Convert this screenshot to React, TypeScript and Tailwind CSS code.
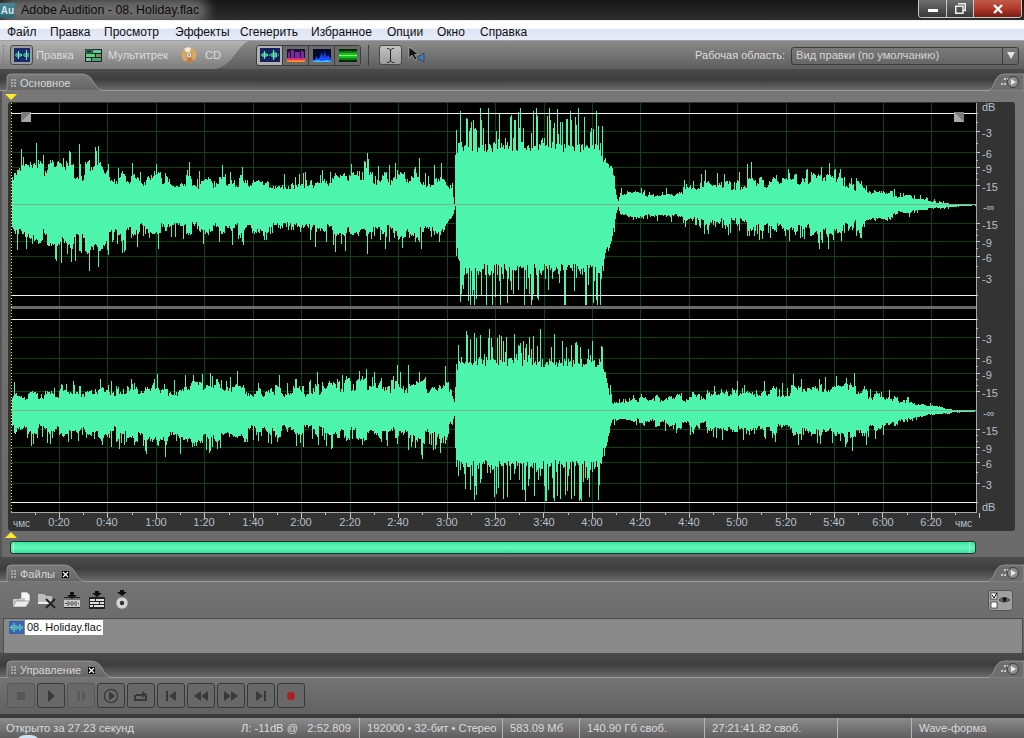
import React from "react";

const FONT = "[font-family:'Liberation_Sans',Arial,sans-serif]";

type Pt = [number, number];
function env(pts: Pt[], x: number) {
  for (let i = 1; i < pts.length; i++) {
    if (x <= pts[i][0]) {
      const [a, b] = [pts[i - 1], pts[i]];
      return a[1] + ((b[1] - a[1]) * (x - a[0])) / (b[0] - a[0]);
    }
  }
  return pts[pts.length - 1][1];
}
function rng(seed: number) {
  let s = seed;
  return () => {
    s = (s + 0x6d2b79f5) | 0;
    let t = Math.imul(s ^ (s >>> 15), 1 | s);
    t = (t + Math.imul(t ^ (t >>> 7), 61 | t)) ^ t;
    return ((t ^ (t >>> 14)) >>> 0) / 4294967296;
  };
}
function wave(top: Pt[], bot: Pt[], cy: number, seed: number, minY: number, maxY: number) {
  const r = rng(seed);
  let chunk = 0.8;
  let left = 0;
  const sample = (a: number, x: number) => {
    const loud = x > 456 && x < 604;
    const roll = r();
    if (loud) {
      if (roll < 0.33) return a * (0.74 + r() * 0.38);
      return a * (0.6 + r() * 0.12);
    }
    if (roll < 0.14) return a * (chunk + 0.15 + r() * 0.4);
    return a * (chunk - 0.08 + r() * 0.16);
  };
  let d = "";
  for (let x = 12; x < 976; x++) {
    if (left-- <= 0) {
      chunk = 0.62 + r() * 0.42;
      left = 1 + Math.floor(r() * 5);
    }
    const u = Math.max(cy - sample(env(top, x), x), minY);
    const l = Math.min(cy + sample(env(bot, x), x), maxY);
    d += `M${x + 0.5} ${u.toFixed(0)}V${l.toFixed(0)}`;
  }
  return d;
}

const c1t: Pt[] = [[12,42],[20,48],[40,42],[60,44],[80,40],[100,48],[105,36],[130,30],[160,32],[200,26],[240,28],[280,26],[320,28],[370,36],[400,32],[440,30],[452,18],[454,1],[455,55],[458,90],[470,88],[600,88],[604,62],[612,36],[616,10],[618,3],[620,14],[660,12],[700,22],[740,26],[780,30],[820,32],[860,22],[900,12],[930,5],[950,1],[975,0.5]];
const c1b: Pt[] = [[12,36],[40,38],[70,44],[100,52],[110,36],[150,30],[200,28],[260,30],[330,30],[390,32],[430,38],[445,24],[453,10],[455,1],[456,55],[458,84],[462,98],[600,98],[606,60],[612,30],[616,8],[618,2],[620,12],[660,14],[700,18],[760,26],[820,30],[860,26],[900,10],[930,4],[975,0.5]];
const c2t: Pt[] = [[12,20],[100,22],[140,24],[200,28],[260,24],[300,24],[340,32],[400,32],[450,28],[454,8],[456,50],[458,76],[600,72],[606,40],[612,12],[618,8],[640,14],[700,18],[780,24],[840,28],[880,18],[920,8],[950,2],[975,0.5]];
const c2b: Pt[] = [[12,24],[60,24],[120,28],[170,36],[230,26],[300,24],[350,28],[400,30],[445,32],[454,6],[456,50],[460,82],[600,82],[606,40],[612,12],[618,8],[660,16],[720,20],[800,24],[860,26],[900,13],[930,4],[975,0.5]];

const times = ["0:20","0:40","1:00","1:20","1:40","2:00","2:20","2:40","3:00","3:20","3:40","4:00","4:20","4:40","5:00","5:20","5:40","6:00","6:20"];
const gridX = times.map((_, i) => Math.round(59 + i * 48.45));
const h1 = [131,152,167,185,223,241,256,277];
const h2 = [337,358,373,391,429,447,462,483];
const dbLabels: [string, number][] = [["dB",107],["-3",133],["-6",154],["-9",169],["-15",187],["-∞",207],["-15",225],["-9",243],["-6",258],["-3",279],["-3",339],["-6",360],["-9",375],["-15",393],["-∞",413],["-15",431],["-9",449],["-6",464],["-3",485],["dB",507]];

function Chart() {
  const w1 = React.useMemo(() => wave(c1t, c1b, 205, 7, 108, 305), []);
  const w2 = React.useMemo(() => wave(c2t, c2b, 411, 23, 322, 508), []);
  const ticks: number[] = [];
  for (let i = -1; i < 39; i++) ticks.push(Math.round(59 + i * 24.22));
  const dbTicks = [113,122,131,143,152,160,167,173,179,185,223,229,235,241,248,256,266,277,295,319,328,337,349,358,366,373,379,385,391,429,435,441,447,454,462,472,483,502];
  return (
    <svg viewBox="8 102 1007 429" width={1007} height={429} className="block">
      <rect x="11" y="103" width="965" height="409" fill="#000" />
      {gridX.map((x) => (
        <line key={x} x1={x + 0.5} x2={x + 0.5} y1="103" y2="512" stroke="#0e4212" />
      ))}
      {[...h1, ...h2].map((y) => (
        <line key={y} x1="11" x2="976" y1={y + 0.5} y2={y + 0.5} stroke="#0e4212" />
      ))}
      <path d={w1} stroke="#4df4ab" strokeWidth="1" fill="none" />
      <path d={w2} stroke="#4df4ab" strokeWidth="1" fill="none" />
      <line x1="11" x2="976" y1="204.5" y2="204.5" stroke="#7fb09c" />
      <line x1="11" x2="976" y1="410.5" y2="410.5" stroke="#7fb09c" />
      {[113, 295, 319, 502].map((y) => (
        <line key={y} x1="11" x2="976" y1={y + 0.5} y2={y + 0.5} stroke="#f2f2f2" />
      ))}
      <rect x="11" y="306" width="965" height="3" fill="#6a6a6a" />
      <line x1="11.5" x2="11.5" y1="103" y2="512" stroke="#ffee22" strokeDasharray="1 2" />
      {[21, 954].map((x, i) => (
        <g key={x}>
          <rect x={x} y="112" width="10" height="10" fill="#7b7b7b" />
          <path d={i === 0 ? `M${x} ${122}L${x + 10} ${112}V${122}Z` : `M${x} ${112}L${x + 10} ${122}H${x}Z`} fill="#a8a8a8" />
        </g>
      ))}
      <line x1="976.5" x2="976.5" y1="103" y2="513" stroke="#a8a8a8" />
      <line x1="11" x2="977" y1="512.5" y2="512.5" stroke="#a8a8a8" />
      {dbTicks.map((y) => (
        <line key={y} x1="976" x2={[131,152,167,185,223,241,256,277,337,358,373,391,429,447,462,483].includes(y) ? 980 : 978} y1={y + 0.5} y2={y + 0.5} stroke="#c8c8c8" />
      ))}
      {ticks.map((x, i) => (
        <line key={i} x1={x + 0.5} x2={x + 0.5} y1="513" y2={i % 2 === 1 ? 518 : 515} stroke="#c8c8c8" />
      ))}
      <g fill="#b4c0cc" fontFamily="Liberation Sans, Arial, sans-serif" fontSize="11">
        <text x="13" y="527" fontSize="10">чмс</text>
        {times.map((t, i) => (
          <text key={t} x={gridX[i]} y="526" textAnchor="middle">{t}</text>
        ))}
        <text x="955" y="527" fontSize="10">чмс</text>
        {dbLabels.map(([t, y], i) => (
          <text key={i} x={t === "-∞" ? 983 : 982} y={y + 4} >{t}</text>
        ))}
      </g>
    </svg>
  );
}

function Grip() {
  return (
    <span className="grid grid-cols-2 gap-x-[1px] gap-y-[1px] w-[5px] shrink-0">
      {[0, 1, 2, 3, 4, 5].map((i) => (
        <span key={i} className="w-[2px] h-[2px] bg-[#a8a8a8]" />
      ))}
    </span>
  );
}

function Band({ id, label, width, close, h }: { id: string; label: string; width: number; close?: number; h: number }) {
  return (
    <div style={{ height: h }} className="relative shrink-0 bg-gradient-to-b from-[#4c4c4c] via-[#3e3e3e] to-[#6a6a6a] border-b border-[#9c9c9c]">
      <svg className="absolute left-0 bottom-[-1px]" width={width + 10} height={18} viewBox={`0 0 ${width + 10} 18`}>
        <defs>
          <linearGradient id={id} x1="0" x2="0" y1="0" y2="1">
            <stop offset="0" stopColor="#7c7c7c" />
            <stop offset="1" stopColor="#646464" />
          </linearGradient>
        </defs>
        <path d={`M0 17.5H7V5Q7 1 11 1H${width - 16}Q${width - 9} 1 ${width - 5} 8Q${width - 1} 17 ${width + 5} 17.5H${width + 10}V18H0Z`} fill={`url(#${id})`} stroke="#9c9c9c" strokeWidth="0.8" />
      </svg>
      <div className="absolute left-[11px] bottom-[-1px] h-[16px] flex items-center gap-[4px] text-[11px] text-[#d6d6d6]">
        <Grip />
        <span>{label}</span>
        {close ? (
          <span style={{ marginLeft: close }} className="w-[7px] h-[7px] flex items-center justify-center bg-black text-white">
            <svg width="7" height="7" viewBox="0 0 7 7"><path d="M1 1L6 6M6 1L1 6" stroke="#fff" strokeWidth="1.2" /></svg>
          </span>
        ) : null}
      </div>
      <svg className="absolute right-0 bottom-[-1px]" width="36" height="18" viewBox="0 0 36 18">
        <path d="M0 17.5Q4 17 7 8Q10 1 17 1H36V18H0Z" fill="#6e6e6e" stroke="#9c9c9c" strokeWidth="0.8" />
        <g fill="#c8c8c8">
          <rect x="16" y="5" width="2" height="2" /><rect x="19" y="5" width="2" height="2" />
          <rect x="13" y="10" width="2" height="2" /><rect x="16" y="10" width="2" height="2" />
        </g>
        <circle cx="25" cy="9" r="5.5" fill="#8e8e8e" stroke="#3d3d3d" />
        <path d="M23 6V12L28 9Z" fill="#e8e8e8" />
      </svg>
    </div>
  );
}

function WaveIcon({ bg = "#1c2a6a" }: { bg?: string }) {
  return (
    <svg width="20" height="14" viewBox="0 0 20 14">
      <rect width="20" height="14" fill={bg} />
      <path d="M1 7H3M3 5V9M4.5 3V11M6 5V9M7.5 6V8M9 7H11M12 5V9M13.5 2V12M15 4V10M16.5 5V9M18 7H19" stroke="#5ff0b0" strokeWidth="1.2" />
    </svg>
  );
}

function MultiIcon() {
  return (
    <svg width="17" height="13" viewBox="0 0 17 13">
      <rect width="17" height="13" fill="#222" />
      <rect x="1" y="1" width="6" height="3" fill="#222" stroke="#4fd0a0" strokeWidth="0.6" />
      <rect x="8" y="1" width="8" height="3" fill="#4fd0a0" />
      <rect x="1" y="5" width="9" height="3" fill="#5fd070" />
      <rect x="11" y="5" width="5" height="3" fill="#7a8f50" />
      <rect x="1" y="9" width="5" height="3" fill="#7fc0a0" />
      <rect x="7" y="9" width="9" height="3" fill="#4fa080" />
    </svg>
  );
}

function CdIcon() {
  return (
    <svg width="16" height="16" viewBox="0 0 16 16">
      <circle cx="8" cy="8" r="7.5" fill="#d8a860" />
      <path d="M8 8L3 2A7.5 7.5 0 0 1 10 .8Z" fill="#f4ecd4" />
      <path d="M8 8L13 14A7.5 7.5 0 0 1 5 14.8Z" fill="#c07a4e" />
      <circle cx="8" cy="8" r="2.6" fill="#eee" stroke="#8a6a40" strokeWidth="0.6" />
      <circle cx="8" cy="8" r="1" fill="#888" />
    </svg>
  );
}

function ViewIcon({ kind }: { kind: number }) {
  if (kind === 0) return <WaveIcon bg="#16205c" />;
  if (kind === 1)
    return (
      <svg width="18" height="13" viewBox="0 0 18 13">
        <rect width="18" height="13" fill="#1a1030" />
        <path d="M1 13V4L3 2V13ZM4 13V1H7V13ZM8 13V3H13V13ZM14 13V1L17 3V13Z" fill="#7a2a9a" />
        <rect y="9" width="18" height="2" fill="#e02a7a" />
        <rect y="11" width="18" height="2" fill="#ff8a20" />
      </svg>
    );
  if (kind === 2)
    return (
      <svg width="18" height="13" viewBox="0 0 18 13">
        <rect width="18" height="13" fill="#04082a" />
        <path d="M0 13V10L2 11L3 7L5 10L7 8L9 3L10 9L12 2L13 9L15 6L18 10V13Z" fill="#1a4cff" />
        <path d="M0 13V12L5 11L9 12L14 11L18 12V13Z" fill="#35c8ff" />
      </svg>
    );
  return (
    <svg width="18" height="13" viewBox="0 0 18 13">
      <rect width="18" height="13" fill="#062806" />
      <rect y="2" width="18" height="9" fill="#0c7a12" />
      <rect y="4" width="18" height="5" fill="#19c020" />
      <rect y="6" width="18" height="1" fill="#7cff70" />
    </svg>
  );
}

function TitleBar() {
  return (
    <div className="relative h-[20px] shrink-0 bg-gradient-to-b from-[#161616] to-[#2e2e2e] overflow-hidden">
      <div className="absolute left-0 top-[-2px] w-[208px] h-[26px] bg-[#6c6c6c] blur-[6px] rounded-full" />
      <div className="relative flex items-center h-full">
        <div className="w-[15px] h-[15px] bg-gradient-to-b from-[#4d8a96] to-[#2f6470] text-[#d8e8ea] text-[10px] font-bold flex items-center justify-center">Au</div>
        <span className="ml-[6px] text-[12.4px] text-[#0a0a0a]">Adobe Audition - 08. Holiday.flac</span>
      </div>
      <div className="absolute right-[2px] top-0 flex h-[18px] w-[104px] border border-t-0 border-[#c8c8c8] rounded-b-[4px] overflow-hidden">
        <div className="w-[28px] flex items-center justify-center bg-gradient-to-b from-[#6e6e6e] to-[#3a3a3a] border-r border-[#c8c8c8]">
          <span className="w-[10px] h-[3px] mt-[4px] bg-white" />
        </div>
        <div className="w-[27px] flex items-center justify-center bg-gradient-to-b from-[#6e6e6e] to-[#3a3a3a] border-r border-[#c8c8c8]">
          <svg width="11" height="11" viewBox="0 0 11 11"><path d="M3 .75H10.25V7.5H8M.75 3.25H8V10.25H.75Z" fill="none" stroke="#eee" strokeWidth="1.5" /></svg>
        </div>
        <div className="flex-1 flex items-center justify-center bg-gradient-to-b from-[#c05a4a] via-[#b23a2a] to-[#7a1c12]">
          <svg width="12" height="10" viewBox="0 0 12 10"><path d="M2 1L10 9M10 1L2 9" stroke="#fff" strokeWidth="2.4" /></svg>
        </div>
      </div>
    </div>
  );
}

const menus = [["Файл",7],["Правка",50],["Просмотр",104],["Эффекты",175],["Сгенерить",240],["Избранное",311],["Опции",387],["Окно",437],["Справка",480]] as const;

function MenuBar() {
  return (
    <div className="h-[21px] shrink-0 flex items-center pt-[2px] border-t border-[#f0f0f0] border-b border-b-[#9aa0ac] bg-[linear-gradient(to_bottom,#ffffff_0%,#ffffff_35%,#dfe5f4_45%,#e6ebf7_100%)] text-[12px] text-[#101010]">
      {menus.map(([m], i) => {
        const next = i < menus.length - 1 ? menus[i + 1][1] - menus[i][1] : 60;
        return (
          <span key={m} style={{ width: next, marginLeft: i === 0 ? 7 : 0 }} className="shrink-0">{m}</span>
        );
      })}
    </div>
  );
}

function Toolbar() {
  return (
    <div className="relative h-[28px] shrink-0 flex items-center bg-gradient-to-b from-[#8a8a8a] to-[#5e5e5e] text-[11.2px]">
      <svg className="absolute left-0 top-0" width="252" height="28" viewBox="0 0 252 28" preserveAspectRatio="none">
        <defs>
          <linearGradient id="tl" x1="0" x2="0" y1="0" y2="1">
            <stop offset="0" stopColor="#b4b4b4" />
            <stop offset="1" stopColor="#7c7c7c" />
          </linearGradient>
        </defs>
        <path d="M0 0H250C238 2 234 24 216 28H0Z" fill="url(#tl)" />
      </svg>
      <div className="relative flex items-center h-full w-full">
        <span className="ml-[3px] w-px h-[20px] border-l border-dotted border-[#777]" />
        <span className="ml-[6px] w-[23px] h-[20px] flex items-center justify-center rounded-[3px] border border-[#4a4a4a] bg-[#9a9a9a] overflow-hidden">
          <svg width="16" height="14" viewBox="0 0 16 14">
            <rect width="16" height="14" fill="#1c2a6a" />
            <path d="M1 7H2M3 5V9M4.5 3V11M6 5V9M7.5 6V8M9 7H10M11 5V9M12.5 2V12M14 5V9" stroke="#5ff0b0" strokeWidth="1.1" />
          </svg>
        </span>
        <span className="ml-[3px] mt-[1px] w-[49px] text-[#dcdcdc]">Правка</span>
        <MultiIcon />
        <span className="ml-[6px] mt-[1px] w-[73px] text-[#dcdcdc]">Мультитрек</span>
        <CdIcon />
        <span className="ml-[8px] mt-[1px] w-[51px] text-[#dcdcdc]">CD</span>
        <div className="flex h-[21px] w-[105px] rounded-[3px] border border-[#3c3c3c] overflow-hidden">
          {[0, 1, 2, 3].map((k) => (
            <span key={k} className={`flex-1 flex items-center justify-center ${k < 3 ? "border-r border-[#3c3c3c]" : ""} ${k === 0 ? "bg-[#b0b0b0]" : "bg-[#6a6a6a]"}`}>
              <ViewIcon kind={k} />
            </span>
          ))}
        </div>
        <span className="ml-[7px] w-px h-[21px] bg-[#3e3e3e]" />
        <span className="ml-[10px] w-[23px] h-[20px] flex items-center justify-center rounded-[3px] border border-[#4a4a4a] bg-gradient-to-b from-[#c4c4c4] to-[#9c9c9c]">
          <svg width="9" height="15" viewBox="0 0 9 15"><path d="M1 .5C3 .5 4.5 1 4.5 3V12C4.5 14 3 14.5 1 14.5M8 .5C6 .5 4.5 1 4.5 3M4.5 12C4.5 14 6 14.5 8 14.5" fill="none" stroke="#222" strokeWidth="1" /></svg>
        </span>
        <span className="ml-[6px]">
          <svg width="18" height="18" viewBox="0 0 18 18">
            <path d="M1 1L1 12L4 9L7 14L9 13L6.5 8.5H10.5Z" fill="#111" stroke="#ddd" strokeWidth="0.5" />
            <path d="M10 10H12L16 7V16L12 13H10Z" fill="#4a7ac0" stroke="#1a2a50" strokeWidth="0.6" />
          </svg>
        </span>
        <span className="ml-auto mt-[1px] text-[11px] text-[#dcdcdc] mr-[6px]">Рабочая область:</span>
        <div className="mr-[5px] mt-[1px] w-[228px] h-[18px] flex items-center rounded-[3px] border border-[#3a3a3a] bg-gradient-to-b from-[#7a7a7a] to-[#666] text-[#d6d6d6] overflow-hidden">
          <span className="flex-1 pl-[4px]">Вид правки (по умолчанию)</span>
          <span className="w-[16px] h-full flex items-center justify-center border-l border-[#3a3a3a]">
            <svg width="8" height="7" viewBox="0 0 8 7"><path d="M0 0H8L4 7Z" fill="#e4e4e4" /></svg>
          </span>
        </div>
      </div>
    </div>
  );
}

function FileIcons() {
  return (
    <div className="flex items-center">
      <svg className="ml-[12px]" width="19" height="19" viewBox="0 0 19 19">
        <path d="M9 1H15L18 4V11H9Z" fill="#f4f4f4" stroke="#555" strokeWidth="0.5" />
        <path d="M1 8H7L9 7H13V16H1Z" fill="#c8c8c8" />
        <path d="M4 10H18L14 16H1Z" fill="#eaeaea" stroke="#666" strokeWidth="0.5" />
      </svg>
      <svg className="ml-[6px]" width="20" height="19" viewBox="0 0 20 19">
        <path d="M1 3H7L9 5H15V13H1Z" fill="#bdbdbd" />
        <rect x="1" y="11" width="13" height="2" fill="#eee" />
        <path d="M9 8L18 17M18 8L9 17" stroke="#222" strokeWidth="1.8" />
      </svg>
      <svg className="ml-[6px]" width="18" height="19" viewBox="0 0 18 19">
        <path d="M7 1H11V4H14L9 8L4 4H7Z" fill="#111" />
        <rect x="1" y="6" width="16" height="1" fill="#222" />
        <rect x="1" y="9" width="16" height="7" fill="#c8c8c8" />
        <path d="M2 12.5H4M5 10V15M7 11V14M9 10V15M11 11V14M13 10V15M15 12.5H16" stroke="#444" strokeWidth="1" />
        <rect x="1" y="16" width="16" height="1" fill="#222" />
      </svg>
      <svg className="ml-[7px]" width="18" height="19" viewBox="0 0 18 19">
        <path d="M7 0H11V2H14L9 6L4 2H7Z" fill="#111" />
        <rect x="1" y="6" width="16" height="12" fill="#222" />
        <path d="M2 8H7V10H2ZM8 8H16V10H8ZM2 11H11V13H2ZM12 11H16V13H12ZM2 14H5V16H2ZM6 14H16V16H6Z" fill="#ddd" />
      </svg>
      <svg className="ml-[9px]" width="14" height="20" viewBox="0 0 14 20">
        <path d="M5 0H9V2H12L7 6L2 2H5Z" fill="#111" />
        <circle cx="7" cy="13" r="6" fill="#d4d4d4" stroke="#666" strokeWidth="0.5" />
        <circle cx="7" cy="13" r="2.2" fill="#333" />
      </svg>
    </div>
  );
}

function Transport({ kind, dim }: { kind: number; dim?: boolean }) {
  const c = dim ? "#555" : "#3a3a3a";
  const draw: React.ReactNode[] = [
    <rect x="4" y="4" width="8" height="8" fill="#555" />,
    <path d="M5 2V14L12 8Z" fill={c} />,
    <path d="M4 3H7V13H4ZM9 3H12V13H9Z" fill="#5a5a5a" />,
    <g><circle cx="8" cy="8" r="6.6" fill="none" stroke={c} strokeWidth="1.3" /><path d="M6 3.5V12.5L12 8Z" fill={c} /></g>,
    <path d="M1 7V13H14V7H12V11H3V7ZM3 6H9V3L14 6.5L9 10V8H3Z" fill={c} />,
    <path d="M3 3H5V13H3ZM13 3V13L6 8Z" fill={c} />,
    <path d="M8 3V13L1 8ZM15 3V13L8 8Z" fill={c} />,
    <path d="M1 3V13L8 8ZM8 3V13L15 8Z" fill={c} />,
    <path d="M3 3V13L10 8ZM11 3H13V13H11Z" fill={c} />,
    <circle cx="8" cy="8" r="4" fill="#b01c24" />,
  ];
  return (
    <span className={`w-[28px] h-[25px] flex items-center justify-center rounded-[3px] border ${dim ? "border-[#575757]" : "border-[#383838]"} bg-[#686868]`}>
      <svg width="16" height="16" viewBox="0 0 16 16">{draw[kind]}</svg>
    </span>
  );
}

const statusCells: [string, number, string][] = [
  ["Открыто за 27.23 секунд", 360, "pl-[6px]"],
  ["192000 • 32-бит • Стерео", 143, "pl-[7px]"],
  ["583.09 Мб", 77, "pl-[7px]"],
  ["140.90 Гб своб.", 125, "pl-[7px]"],
  ["27:21:41.82 своб.", 133, "pl-[7px]"],
  ["", 74, ""],
  ["Wave-форма", 112, "pl-[7px]"],
];

export default function App() {
  return (
    <div className={`relative w-[1024px] h-[738px] overflow-hidden flex flex-col bg-[#333] ${FONT}`}>
      <TitleBar />
      <MenuBar />
      <Toolbar />

      <Band id="t1" label="Основное" width={98} h={22} />
      <div className="relative h-[466px] shrink-0 bg-gradient-to-b from-[#777] to-[#6a6a6a] pt-[11px] pl-[8px] border-l-[2px] border-[#555]">
        <div className="-ml-[2px] w-[1007px] h-[429px] rounded-[3px] bg-[#333] overflow-hidden">
          <Chart />
        </div>
        <div className="mt-[10px] w-[966px] h-[13px] rounded-[3px] border border-[#2c2c2c] bg-gradient-to-b from-[#2de79f] via-[#65f6bb] to-[#2ee39c] flex justify-between px-[2px]">
          <span className="w-px h-full bg-[#a8f8d4]" />
          <span className="w-px h-full bg-[#a8f8d4] mr-[3px]" />
        </div>
        <svg className="absolute left-[3px] top-[3px]" width="12" height="7" viewBox="0 0 12 7"><path d="M0 0H12L6 6Z" fill="#ffe92a" /></svg>
        <svg className="absolute left-[3px] top-[441px]" width="12" height="7" viewBox="0 0 12 7"><path d="M0 6H12L6 0Z" fill="#ffe92a" /></svg>
      </div>

      <Band id="t2" label="Файлы" width={80} close={3} h={25} />
      <div className="h-[71px] shrink-0 flex flex-col bg-gradient-to-b from-[#747474] to-[#666]">
        <div className="h-[36px] flex items-center justify-between pr-[11px]">
          <FileIcons />
          <span className="w-[25px] h-[21px] flex items-center justify-center gap-[1px] rounded-[3px] border border-[#555] bg-[#a0a0a0]">
            <svg width="21" height="17" viewBox="0 0 21 17">
              <rect x="1" y="1" width="6" height="6" fill="#fff" stroke="#222" strokeWidth="0.7" />
              <path d="M2 3L4 6L7 1" stroke="#000" strokeWidth="1" fill="none" />
              <rect x="1" y="10" width="6" height="6" fill="#fff" stroke="#222" strokeWidth="0.7" />
              <path d="M9 8Q14 3 20 8Q14 12 9 8Z" fill="#777" stroke="#222" strokeWidth="0.8" />
              <circle cx="14.5" cy="7.5" r="2" fill="#111" />
            </svg>
          </span>
        </div>
        <div className="h-[35px] ml-[3px] mr-[1px] border-t border-l border-r border-[#4c4c4c] bg-[#8a8a8a] flex items-start pt-[1px] pl-[5px]">
          <svg className="mt-[1px]" width="15" height="13" viewBox="0 0 15 13">
            <rect width="15" height="13" rx="1" fill="#3a62b0" />
            <path d="M1 6.5H3M3 4V9M5 2V11M7 4V9M9 5V8M11 3V10M13 5V8" stroke="#6ff2c0" strokeWidth="1" />
          </svg>
          <span className="ml-[1px] h-[15px] px-[2px] bg-white text-[#111] text-[11px] leading-[15px]">08. Holiday.flac</span>
        </div>
      </div>

      <Band id="t3" label="Управление" width={107} close={3} h={25} />
      <div className="h-[36px] shrink-0 bg-gradient-to-b from-[#747474] to-[#626262] flex items-start pt-[5px] pl-[7px] gap-[2px]">
        <Transport kind={0} dim />
        <Transport kind={1} />
        <Transport kind={2} dim />
        <Transport kind={3} />
        <Transport kind={4} />
        <Transport kind={5} />
        <Transport kind={6} />
        <Transport kind={7} />
        <Transport kind={8} />
        <Transport kind={9} />
      </div>
      <div className="h-[4px] shrink-0 bg-[#3a3a3a]" />
      <div className="relative h-[20px] shrink-0 flex bg-gradient-to-b from-[#8c8c8c] to-[#5e5e5e] text-[11.2px] text-[#dadada] whitespace-nowrap">
        {statusCells.map(([t, w, p], i) => (
          <div key={i} style={{ width: w }} className={`relative h-full flex items-center shrink-0 ${p} ${i < statusCells.length - 1 ? "border-r border-[#b4b4b4]" : ""}`}>
            {t}
            {i === 0 ? <span className="absolute left-[241px]">Л: -11dB @&nbsp;&nbsp;&nbsp;2:52.809</span> : null}
          </div>
        ))}
        <span className="absolute left-[15px] top-[17px] w-[26px] h-[10px] rounded-t-full bg-[#cfe0ee]" />
      </div>
    </div>
  );
}
